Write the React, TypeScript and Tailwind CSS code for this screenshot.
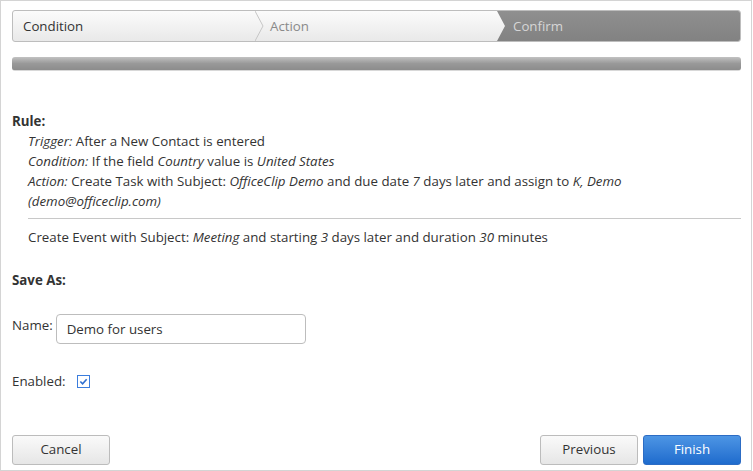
import React from "react";

const steps = [
  { label: "Condition", state: "done" },
  { label: "Action", state: "todo" },
  { label: "Confirm", state: "active" },
];

const Chevron = () => (
  <svg
    className="pointer-events-none absolute -right-[9px] top-0 z-10 h-full w-[9px]"
    viewBox="0 0 9 30"
    preserveAspectRatio="none"
  >
    <polyline points="0,0 8,15 0,30" fill="none" stroke="#c6c6c6" strokeWidth="1" />
  </svg>
);

export default function App() {
  return (
    <div className="h-[471px] w-[753px] bg-white font-['Open_Sans',sans-serif] text-[13.3px] text-[#333]">
      <div className="flex h-[471px] w-[752px] flex-col border border-[#d4d4d4] pl-[11px] pr-[10px] pt-[9px]">
        {/* wizard steps */}
        <div className="relative flex h-[32px] overflow-hidden rounded-[3px] border border-[#bdbdbd] bg-gradient-to-b from-[#fbfbfb] to-[#e9e9e9]">
          {steps.map((step, i) => (
            <div
              key={step.label}
              className={
                step.state === "active"
                  ? "flex min-w-0 flex-1 items-center bg-gradient-to-b from-[#8f8f8f] to-[#828282] pl-[16px] pt-[2px] text-[#d6d6d6] [clip-path:polygon(0_0,100%_0,100%_100%,0_100%,8px_50%)]"
                  : i === 0
                    ? "relative flex w-[242px] shrink-0 items-center pl-[10px] pt-[2px] text-[#333]"
                    : "relative flex w-[242px] shrink-0 items-center pl-[15px] pt-[2px] text-[#8a8a8a]"
              }
            >
              <span className="leading-none">{step.label}</span>
              {i === 0 && <Chevron />}
            </div>
          ))}
        </div>

        {/* progress */}
        <div className="mt-[15px] h-[14px] rounded-[3px] border-b border-[#d8d8d8] bg-gradient-to-b from-[#c2c2c2] via-[#999] to-[#8c8c8c]" />

        {/* rule */}
        <div className="mt-[40px] leading-[20px]">
          <div className="font-bold">Rule:</div>
          <div className="pl-[16px]">
            <div>
              <i>Trigger:</i> After a New Contact is entered
            </div>
            <div>
              <i>Condition:</i> If the field <i>Country</i> value is <i>United States</i>
            </div>
            <div>
              <i>Action:</i> Create Task with Subject: <i>OfficeClip Demo</i> and due date <i>7</i>{" "}
              days later and assign to <i>K, Demo (demo@officeclip.com)</i>
            </div>
            <div className="mt-[7px] border-t border-[#c8c8c8] pt-[8px]">
              Create Event with Subject: <i>Meeting</i> and starting <i>3</i> days later and duration{" "}
              <i>30</i> minutes
            </div>
          </div>
        </div>

        {/* save as */}
        <div className="mt-[23px] font-bold leading-[20px]">Save As:</div>

        <div className="mt-[24px] flex items-start gap-[3px]">
          <label className="pt-[1px] leading-[20px]">Name:</label>
          <input
            readOnly
            value="Demo for users"
            className="h-[30px] w-[250px] rounded-[4px] border border-[#bdbdbd] px-[10px] text-[13.3px] text-[#333] outline-none"
          />
        </div>

        <div className="mt-[27px] flex items-center gap-[11px] leading-[20px]">
          <span>Enabled:</span>
          <span className="flex h-[13px] w-[13px] items-center justify-center border border-[#3b7ddd] bg-white">
            <svg viewBox="0 0 10 10" className="h-[9px] w-[9px]">
              <polyline points="1.5,5 4,7.5 8.5,2.5" fill="none" stroke="#2f6fd0" strokeWidth="1.8" />
            </svg>
          </span>
        </div>

        {/* buttons */}
        <div className="mt-auto mb-[5px] flex items-center">
          <button className="h-[30px] w-[98px] rounded-[3px] border border-[#bcbcbc] bg-gradient-to-b from-[#fafafa] to-[#e6e6e6] text-[13.3px] text-[#333]">
            Cancel
          </button>
          <div className="flex-1" />
          <button className="h-[30px] w-[98px] rounded-[3px] border border-[#bcbcbc] bg-gradient-to-b from-[#fafafa] to-[#e6e6e6] text-[13.3px] text-[#333]">
            Previous
          </button>
          <button className="ml-[5px] h-[30px] w-[98px] rounded-[3px] border border-[#2c6cc4] bg-gradient-to-b from-[#4d95e4] to-[#1e6bcd] text-[13.3px] text-white">
            Finish
          </button>
        </div>
      </div>
    </div>
  );
}
